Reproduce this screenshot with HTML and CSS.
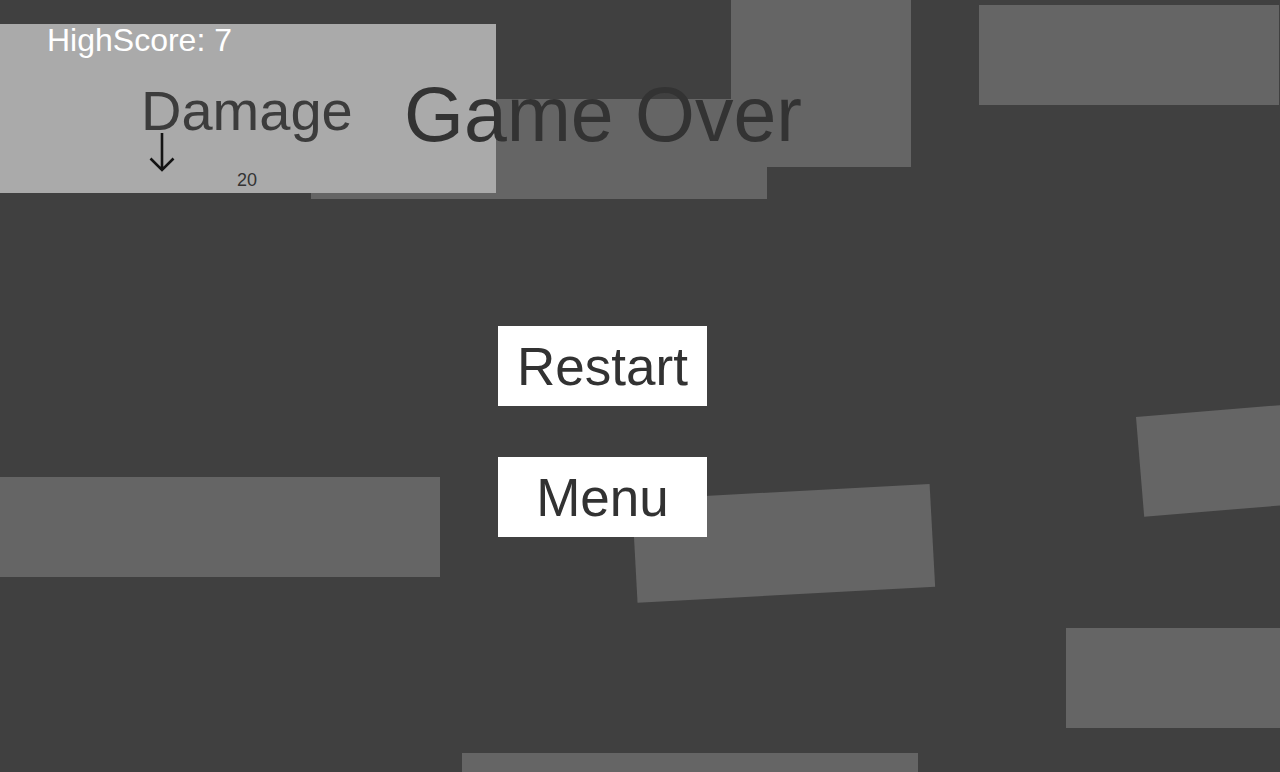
FILE: index.html
```html
<!DOCTYPE html>
<html lang="en">
<head>
    <meta charset="UTF-8">
    <meta name="viewport" content="width=device-width, initial-scale=1.0">
    <title>Falling Blocks - Game Over</title>
    <link rel="stylesheet" href="styles.css">
</head>
<body>
    <div class="game">
        <!-- blocks left on the field when the round ended -->
        <div class="field">
            <div class="block block-a"></div>
            <div class="block block-b"></div>
            <div class="block block-c"></div>
            <div class="block block-d"></div>
            <div class="block block-e"></div>
            <div class="block block-f"></div>
            <div class="block block-g"></div>
            <div class="block block-h"></div>
        </div>

        <div class="hud">
            <div class="panel">
                <div class="highscore">HighScore: 7</div>
                <div class="damage">Damage</div>
                <div class="damage-row">
                    <svg class="arrow" width="26" height="40" viewBox="0 0 26 40">
                        <path d="M13 0 V37 M1.5 25.5 L13 37 L24.5 25.5" fill="none" stroke="#141414" stroke-width="2.6"/>
                    </svg>
                    <span class="damage-value">20</span>
                </div>
            </div>

            <h1 class="title">Game Over</h1>

            <div class="menu">
                <button class="btn" onclick="location.reload()">Restart</button>
                <button class="btn">Menu</button>
            </div>
        </div>
    </div>
</body>
</html>
```

FILE: styles.css
```css
body {
    margin: 0;
    padding: 0;
    background-color: #404040;
    font-family: "Liberation Sans", Arial, sans-serif;
    overflow: hidden;
}

.game {
    position: relative;
    width: 1280px;
    height: 772px;
    overflow: hidden;
}

/* game objects sit on a free canvas */
.field {
    position: absolute;
    inset: 0;
}

.block {
    position: absolute;
    background-color: #656565;
    transform-origin: top left;
}

.block-a { left: 311px; top: 99px; width: 456px; height: 100px; }
.block-b { left: 731px; top: 0; width: 180px; height: 167px; }
.block-c { left: 979px; top: 5px; width: 300px; height: 100px; }
.block-d { left: 1136px; top: 417px; width: 300px; height: 100px; transform: rotate(-4.7deg); }
.block-e { left: 632px; top: 500px; width: 298px; height: 103px; transform: rotate(-3.1deg); }
.block-f { left: 1066px; top: 628px; width: 300px; height: 100px; }
.block-g { left: 0; top: 477px; width: 440px; height: 100px; }
.block-h { left: 462px; top: 753px; width: 456px; height: 100px; }

.hud {
    position: absolute;
    inset: 0;
}

.panel {
    width: 496px;
    height: 169px;
    margin-top: 24px;
    background-color: #aaaaaa;
}

.highscore {
    margin-left: 47px;
    font-size: 32px;
    line-height: 32px;
    color: #fff;
}

.damage {
    margin: 30px 0 0 141px;
    font-size: 56px;
    line-height: 50px;
    color: #3c3c3c;
}

.damage-row {
    display: flex;
    align-items: flex-start;
    margin: -3px 0 0 149px;
}

.damage-value {
    margin: 38px 0 0 62px;
    font-size: 18px;
    line-height: 18px;
    color: #333;
}

.title {
    position: absolute;
    left: 404px;
    top: 76px;
    margin: 0;
    font-size: 77px;
    line-height: 77px;
    font-weight: normal;
    color: #333;
}

.menu {
    display: flex;
    flex-direction: column;
    gap: 51px;
    margin: 133px 0 0 498px;
}

.btn {
    display: flex;
    align-items: center;
    justify-content: center;
    width: 209px;
    height: 80px;
    padding: 0;
    border: none;
    background-color: #fff;
    font-family: inherit;
    font-size: 53px;
    line-height: 1;
    color: #323232;
    cursor: pointer;
}
```
